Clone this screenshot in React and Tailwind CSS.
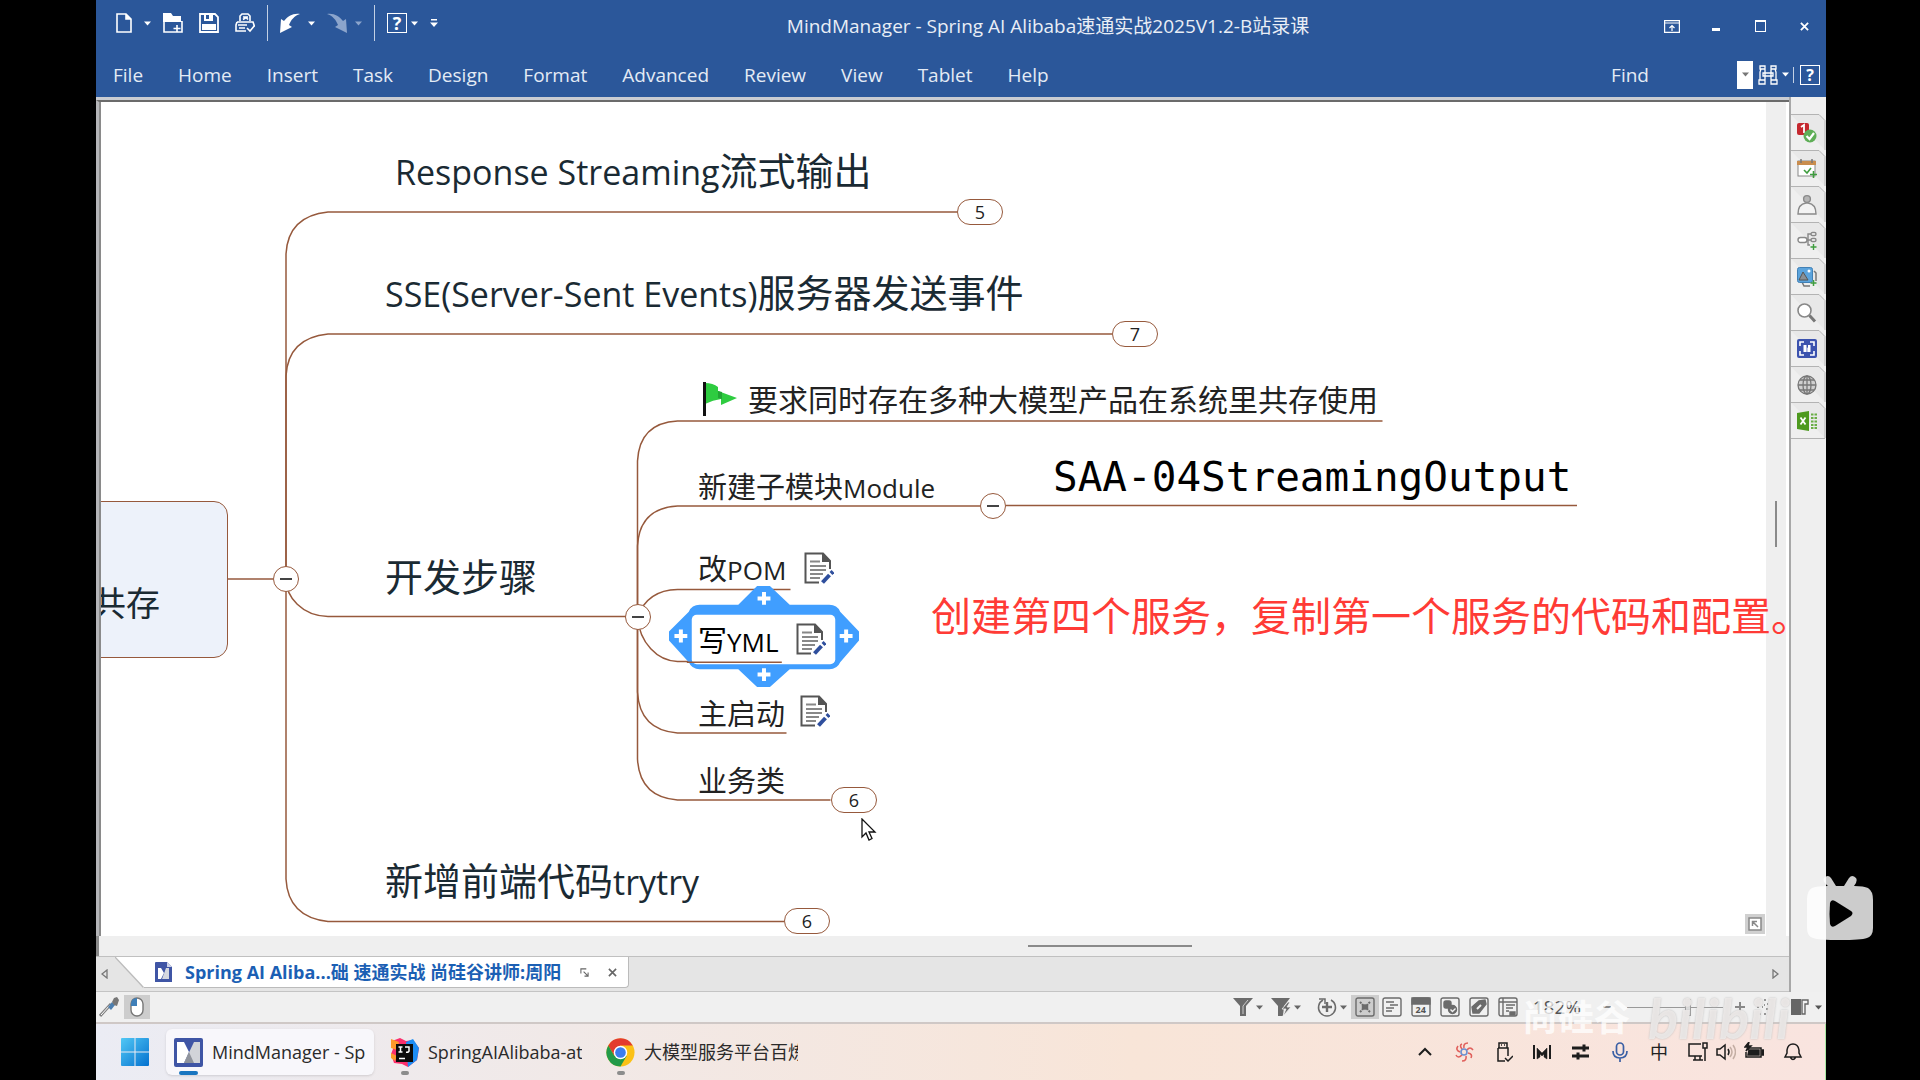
import { useState } from "react";

const MENU = ["File", "Home", "Insert", "Task", "Design", "Format", "Advanced", "Review", "View", "Tablet", "Help"];

function Caret({ className = "text-white" }) {
  return (
    <svg viewBox="0 0 7 5" className={`h-[5px] w-[7px] shrink-0 ${className}`} fill="currentColor">
      <path d="M0 .5h7L3.5 4.5z" />
    </svg>
  );
}

function IconButton({ label, className = "", children }) {
  return (
    <button type="button" aria-label={label} className={`flex shrink-0 items-center justify-center ${className}`}>
      {children}
    </button>
  );
}

/* Blue header: quick access bar, title, window buttons, ribbon tabs */
function TitleBar() {
  return (
    <div className="flex h-[52px] items-center">
      <div className="flex h-full items-center gap-3 pb-[6px] pl-5">
        <IconButton label="New">
          <svg viewBox="0 0 16 20" className="h-5 w-4" fill="none" stroke="#fff" strokeWidth="1.6">
            <path d="M1 1h9l5 5v13H1z" />
            <path d="M10 1v5h5" fill="#fff" />
          </svg>
        </IconButton>
        <Caret />
        <div className="flex items-center gap-4">
          <IconButton label="Open">
            <svg viewBox="0 0 20 20" className="h-5 w-5">
              <path d="M0 0h8l2 3h8v5h1v1H0z" fill="#fff" />
              <path d="M1 8v11h18V8" fill="none" stroke="#fff" strokeWidth="1.6" />
              <path d="M10.500 15.500h7M14 12v7" stroke="#fff" strokeWidth="1.6" />
            </svg>
          </IconButton>
          <IconButton label="Save">
            <svg viewBox="0 0 20 20" className="h-5 w-5">
              <path d="M1 1h15l3 3v15H1z" fill="none" stroke="#fff" strokeWidth="1.8" />
              <path d="M5 1h9v7H5z" fill="#fff" />
              <path d="M7 2h3v4H7z" fill="#2b579a" />
              <path d="M3 11h14v6H3z" fill="#fff" />
            </svg>
          </IconButton>
          <IconButton label="Print">
            <svg viewBox="0 0 20 20" className="h-5 w-5" fill="none" stroke="#fff" strokeWidth="1.6">
              <path d="M5 8V3l2-2h6l2 2v5M8 4h5M8 6.500l3-2 2 2M2 9h16l1 3v2M2 9l-1 3v6h10M3 12h9M4 15h6M12 15l3 3 5-6" />
            </svg>
          </IconButton>
        </div>
        <span className="h-9 w-px bg-[#c3d0e4]" />
        <div className="flex items-center gap-2">
          <IconButton label="Undo">
            <svg viewBox="0 0 20 20" className="h-5 w-5" fill="#fff">
              <path d="M0 20 1 6l3 2C8 3 13 0 20 1 14 3 11 7 9 12l3 2z" />
            </svg>
          </IconButton>
          <Caret />
        </div>
        <div className="flex items-center gap-2">
          <IconButton label="Redo">
            <svg viewBox="0 0 20 20" className="h-5 w-5" fill="#8ca5cc">
              <path d="M20 20 19 6l-3 2C12 3 7 0 0 1c6 2 9 6 11 11l-3 2z" />
            </svg>
          </IconButton>
          <Caret className="text-[#8ca5cc]" />
        </div>
        <span className="h-9 w-px bg-[#c3d0e4]" />
        <div className="flex items-center gap-1">
          <IconButton label="Help" className="h-5 w-5 border border-white text-[18px] leading-none font-bold text-white">
            ?
          </IconButton>
          <Caret />
        </div>
        <IconButton label="Customize">
          <svg viewBox="0 0 8 8" className="h-2 w-2" fill="#fff">
            <path d="M1 0h6v1.500H1zM0 3.500h8L4 8z" />
          </svg>
        </IconButton>
      </div>
      <h1 className="flex-1 truncate pl-2 text-center text-[19px] text-[#e9eef6]">
        MindManager - Spring AI Alibaba速通实战2025V1.2-B站录课
      </h1>
      <div className="flex">
        <IconButton label="Ribbon options" className="h-8 w-11">
          <svg viewBox="0 0 16 13" className="h-[13px] w-4" fill="none" stroke="#fff" strokeWidth="1.200">
            <path d="M.6.6h14.800v11.800H.6zM.6 3h14.800" />
            <path d="M8 11V6M5.500 8 8 5.500 10.500 8" />
          </svg>
        </IconButton>
        <IconButton label="Minimize" className="h-8 w-11">
          <span className="mt-[6px] h-[3px] w-2 bg-white" />
        </IconButton>
        <IconButton label="Maximize" className="h-8 w-11">
          <span className="h-3 w-[11px] border border-t-2 border-white" />
        </IconButton>
        <IconButton label="Close" className="h-8 w-11">
          <svg viewBox="0 0 10 10" className="h-[9px] w-[9px]" stroke="#fff" strokeWidth="2">
            <path d="M1 1l8 8M9 1 1 9" />
          </svg>
        </IconButton>
      </div>
    </div>
  );
}

function Ribbon() {
  return (
    <div className="flex h-[45px] items-center pr-[6px] pl-[17px]">
      <nav className="flex flex-1 items-center gap-[35px]">
        {MENU.map((item) => (
          <button key={item} type="button" className="text-[19px] leading-6 text-[#e4ebf5]">
            {item}
          </button>
        ))}
      </nav>
      <label htmlFor="find" className="text-[19px] leading-6 text-[#e4ebf5]">
        Find
      </label>
      <input id="find" type="text" className="w-[88px] bg-transparent px-2 text-white outline-none" />
      <IconButton label="Find options" className="h-7 w-4 bg-white">
        <Caret className="text-[#777]" />
      </IconButton>
      <IconButton label="Search" className="ml-[5px] gap-1">
        <svg viewBox="0 0 20 20" className="h-5 w-5" fill="none" stroke="#fff" strokeWidth="1.300">
          <path d="M2 1h5v3H2zM13 1h5v3h-5zM3 4h4v11H2V7zM17 4h-4v11h5V7zM1 15h6v4H1zM13 15h6v4h-6zM5 8h10v3H5z" />
        </svg>
        <Caret />
      </IconButton>
      <span className="mr-[6px] ml-1 h-4 w-px bg-[#c3d0e4]" />
      <IconButton label="Ribbon help" className="h-5 w-5 border border-white text-[16px] leading-none font-bold text-white">
        ?
      </IconButton>
    </div>
  );
}

/* Mind map pieces */
function Topic({ className, children }) {
  return <div className={`absolute leading-none whitespace-nowrap ${className}`}>{children}</div>;
}

function Toggle({ className }) {
  return (
    <button
      type="button"
      aria-label="Collapse branch"
      className={`absolute flex h-[26px] w-[26px] items-center justify-center rounded-full border border-[#96593c] bg-white ${className}`}
    >
      <span className="h-[2px] w-3 bg-[#444]" />
    </button>
  );
}

function Count({ className, children }) {
  return (
    <button
      type="button"
      className={`absolute flex h-[26px] w-[46px] items-center justify-center rounded-full border border-[#96593c] bg-white text-[18px] leading-none text-[#222] ${className}`}
    >
      {children}
    </button>
  );
}

function Note({ className }) {
  return (
    <svg viewBox="0 0 30 32" className={`absolute h-8 w-[30px] ${className}`}>
      <path d="M1.500 1.500h18l6 7v9L16 30.500H1.500z" fill="#fff" />
      <path d="M26 17V9l-7-7.500H1.500v29H15" fill="none" stroke="#555" strokeWidth="2" />
      <path d="M18 1v9h9z" fill="#555" />
      <path d="M6 9.500h10M6 14h16M6 18h16M6 22h13M6 26h10" stroke="#888" strokeWidth="1.800" />
      <path d="M18.500 30.500l7-7.500" stroke="#2f4f9d" strokeWidth="4" />
      <path d="M27 21.500l2-2" stroke="#2f4f9d" strokeWidth="4" />
    </svg>
  );
}

function Connectors() {
  return (
    <svg className="absolute inset-0 h-full w-full" fill="none" stroke="#96593c" strokeWidth="1.500">
      <g transform="translate(-99 -102)">
        <path d="M228 579h45" />
        <path d="M286 579V254q2-38 42-42h629" />
        <path d="M286 579V376q2-38 42-42h784" />
        <path d="M286 579c0 18 16 37 42 37.500h300" />
        <path d="M286 579v300q2 38 42 42.500h456" />
        <path d="M637.500 617V461q2-38 40-40h705" />
        <path d="M637.500 617v-71q2-38 40-40h303" />
        <path d="M1006 505.500h571" />
        <path d="M637.500 617q10-27 40-27.500h113" />
        <path d="M637.500 617c2 26 20 44 40 44.500h105" />
        <path d="M637.500 617v75q2 38 40 41h109" />
        <path d="M637.500 617v142q2 38 40 41h153" />
      </g>
    </svg>
  );
}

function Selection() {
  return (
    <svg viewBox="0 0 192 102" className="absolute top-[484px] left-[570px] h-[101px] w-[190px]">
      <path d="M89 0h13l20 19h40q8 0 11 7l19 20v9l-19 22q-3 7-11 7h-40l-20 18H89L70 84H31q-8 0-11-7L0 55v-9l20-20q3-7 11-7h39z" fill="#409eff" />
      <rect x="23" y="29" width="145" height="50" rx="5" fill="#fff" />
      <path d="M96 6v13M89.500 12.500h13M96 83v13M89.500 89.500h13M12 44v13M5.500 50.500h13M179 44v13M172.500 50.500h13" stroke="#fff" strokeWidth="4" />
      <path d="M18 77h96" stroke="#96593c" strokeWidth="1.500" />
    </svg>
  );
}

function Canvas() {
  return (
    <div className="relative min-w-0 flex-1 overflow-hidden bg-white">
      <Connectors />
      <div className="absolute top-[399px] -left-10 h-[157px] w-[169px] rounded-[14px] border border-[#96593c] bg-[#edf2fa]" />
      <Topic className="top-[484px] left-[-7px] text-[34px] text-[#1a2a33]">共存</Topic>

      <Topic className="top-[49px] left-[296px] text-[38px] text-[#1a2a33]">
        <span className="text-[34px]">Response Streaming</span>流式输出
      </Topic>
      <Topic className="top-[171px] left-[286px] text-[38px] text-[#1a2a33]">
        <span className="text-[34px]">SSE(Server-Sent Events)</span>服务器发送事件
      </Topic>
      <Topic className="top-[455px] left-[286px] text-[38px] text-[#1a2a33]">开发步骤</Topic>
      <Topic className="top-[759px] left-[286px] text-[38px] text-[#1a2a33]">
        新增前端代码<span className="text-[34px]">trytry</span>
      </Topic>

      <svg viewBox="0 0 36 36" className="absolute top-[279px] left-[603px] h-9 w-9">
        <path d="M3 2q8 0 13 4v4l19 7-16 7v-6q-8 1-16 5z" fill="#2ecc40" />
        <path d="M16 10l4 1v7l-4-1z" fill="#22a534" />
        <path d="M1 1h3v34H1z" fill="#111" />
      </svg>
      <Topic className="top-[283px] left-[649px] text-[30px] text-[#222]">
        要求同时存在多种大模型产品在系统里共存使用
      </Topic>
      <Topic className="top-[370px] left-[599px] text-[29px] text-[#222]">
        新建子模块<span className="text-[26px]">Module</span>
      </Topic>
      <Topic className="top-[355px] left-[954px] font-['DejaVu_Sans_Mono',monospace] text-[41px] text-black">
        SAA-04StreamingOutput
      </Topic>
      <Topic className="top-[452px] left-[599px] text-[29px] text-[#222]">
        改<span className="text-[26px]">POM</span>
      </Topic>
      <Note className="top-[450px] left-[705px]" />
      <Selection />
      <Topic className="top-[524px] left-[599px] text-[29px] text-black">
        写<span className="text-[26px]">YML</span>
      </Topic>
      <Note className="top-[521px] left-[697px]" />
      <Topic className="top-[597px] left-[599px] text-[29px] text-[#222]">主启动</Topic>
      <Note className="top-[593px] left-[701px]" />
      <Topic className="top-[664px] left-[599px] text-[29px] text-[#222]">业务类</Topic>

      <Toggle className="top-[464px] left-[174px]" />
      <Toggle className="top-[502px] left-[526px]" />
      <Toggle className="top-[391px] left-[881px]" />
      <Count className="top-[97px] left-[858px]">5</Count>
      <Count className="top-[219px] left-[1013px]">7</Count>
      <Count className="top-[685px] left-[732px]">6</Count>
      <Count className="top-[806px] left-[685px]">6</Count>

      <svg viewBox="0 0 16 24" className="absolute top-[716px] left-[762px] h-6 w-4">
        <path d="M1 1v18l4-4 3 7 3-1.500-3-6.500h6z" fill="#fff" stroke="#111" strokeWidth="1.300" />
      </svg>
      <button
        type="button"
        aria-label="Map overview"
        className="absolute right-px bottom-[2px] flex h-5 w-5 items-center justify-center bg-[#d0d0d0]"
      >
        <svg viewBox="0 0 14 14" className="h-[14px] w-[14px]" fill="#fff" stroke="#888" strokeWidth="1.500">
          <path d="M1 1h12v12H1zM4.500 9V4.500H9M5 5l5 5" />
        </svg>
      </button>
      <span className="absolute inset-y-0 left-0 w-[2px] bg-[#8a8a8a]" />
    </div>
  );
}

/* Task pane tabs on the right edge */
const PANES = [
  {
    name: "Task info",
    icon: (
      <>
        <rect x="0" y="0" width="12" height="12" rx="2" fill="#c5282f" />
        <path d="M4 4l3-2v8" stroke="#fff" strokeWidth="1.800" fill="none" />
        <circle cx="13" cy="13" r="6.500" fill="#5fae57" />
        <path d="M9.500 13l3 3 4.500-6" stroke="#fff" strokeWidth="2.200" fill="none" />
      </>
    ),
  },
  {
    name: "Calendar",
    icon: (
      <>
        <rect x="1" y="2" width="17" height="15" fill="#fff" stroke="#888" />
        <path d="M0 2h19v4H0z" fill="#c98d4e" />
        <path d="M4 0v4M15 0v4" stroke="#777" strokeWidth="1.500" />
        <path d="M7 11l3 3 4-5M16.500 12v7M13 15.500h7" stroke="#3f9d3f" strokeWidth="1.600" fill="none" />
      </>
    ),
  },
  {
    name: "Resources",
    icon: (
      <>
        <path d="M1 19q0-10 8-11h2q8 1 8 11z" fill="#f3f3f3" stroke="#8a8a8a" strokeWidth="1.400" />
        <circle cx="10" cy="4" r="3.400" fill="#b5b5b5" stroke="#8a8a8a" strokeWidth="1.400" />
      </>
    ),
  },
  {
    name: "Map parts",
    icon: (
      <g fill="#fff" stroke="#888" strokeWidth="1.400">
        <path d="M14 3h-3v11h2M9 9h5" fill="none" />
        <rect x="1" y="6.500" width="9" height="5" rx="2.500" />
        <rect x="14" y="1.500" width="5" height="3" rx="1.500" />
        <rect x="14" y="7.500" width="5" height="3" rx="1.500" />
        <path d="M16.500 13v6M13.500 16h6" stroke="#3f9d3f" />
      </g>
    ),
  },
  {
    name: "Library",
    icon: (
      <>
        <path d="M17 4l2 2v8M5 15l2 4h6" fill="none" stroke="#777" strokeWidth="1.500" />
        <rect x=".5" y=".5" width="15" height="15" rx="2" fill="#5ba3dc" stroke="#4180b5" />
        <path d="M2 13l4-8 5 8z" fill="#8a8f94" stroke="#555" />
        <circle cx="12" cy="4" r="1.500" fill="#fff" />
        <path d="M16.500 13v6M13.500 16h6" stroke="#3f9d3f" strokeWidth="1.500" />
      </>
    ),
  },
  {
    name: "Search",
    icon: (
      <>
        <circle cx="7.500" cy="7.500" r="6.500" fill="#fff" stroke="#888" strokeWidth="1.600" />
        <path d="M12.500 12.500l5.500 6" stroke="#777" strokeWidth="3" />
      </>
    ),
  },
  {
    name: "MindManager",
    icon: (
      <>
        <rect width="20" height="19" rx="2" fill="#3b52ae" />
        <path d="M3 7V3h4M13 3h4v4M17 12v4h-4M7 16H3v-4" fill="none" stroke="#fff" strokeWidth="1.600" />
        <path d="M6.500 6h3v7h-3zM11 6h2.500v7H11z" fill="#fff" />
        <path d="M9.500 8l1.500 1v4H9.500z" fill="#c3cbea" />
      </>
    ),
  },
  {
    name: "Browser",
    icon: (
      <g fill="none" stroke="#777" strokeWidth="1.300">
        <circle cx="10" cy="10" r="9" fill="#cfcfcf" />
        <ellipse cx="10" cy="10" rx="4" ry="9" />
        <path d="M10 1v18M1 10h18M3 5h14M3 15h14" />
      </g>
    ),
  },
  {
    name: "Excel",
    icon: (
      <>
        <path d="M0 2l12-2v20L0 18z" fill="#4e9a1f" />
        <path d="M3.500 6.500l5 7M8.500 6.500l-5 7" stroke="#fff" strokeWidth="1.800" />
        <path d="M14 3.500h6M14 7h6M14 10.500h6M14 14h6M14 17h6" stroke="#6aae45" strokeWidth="2" strokeDasharray="2.500 1" />
      </>
    ),
  },
];

function PaneTabs() {
  return (
    <aside className="flex w-[35px] shrink-0 flex-col bg-[#efefef] pt-[17px]">
      {PANES.map((pane) => (
        <button key={pane.name} type="button" aria-label={pane.name} className="h-9 w-[35px]">
          <svg viewBox="0 0 35 36" className="h-9 w-[35px]">
            <path d="M0 .5h28l6 6V36" fill="#e8e8e8" stroke="#b3b3b3" />
            <g transform="translate(6 9)">{pane.icon}</g>
          </svg>
        </button>
      ))}
      <span className="h-px w-[34px] bg-[#b3b3b3]" />
    </aside>
  );
}

function DocumentTabs() {
  return (
    <div className="flex h-[35px] border-b border-[#c4c4c4] bg-[#e5e5e5]">
      <IconButton label="Scroll tabs left" className="w-[19px] pr-[3px]">
        <svg viewBox="0 0 7 10" className="h-[10px] w-[7px]" fill="none" stroke="#777" strokeWidth="1.300">
          <path d="M6 1v8L1 5z" />
        </svg>
      </IconButton>
      <svg viewBox="0 0 29 31" className="h-[31px] w-[29px] shrink-0">
        <path d="M0 0h29v31z" fill="#fff" />
        <path d="M0 0l28.500 30.500" stroke="#bbb" strokeWidth="1.300" />
      </svg>
      <div className="flex h-[31px] w-[485px] items-center rounded-br-[4px] border-r border-b border-[#bbb] bg-white pl-[11px]">
        <svg viewBox="0 0 17 20" className="h-5 w-[17px] shrink-0">
          <path d="M0 1q0-1 1-1h11l5 5v15H0z" fill="#3f55a5" />
          <path d="M12 0v5h5z" fill="#cdd3ea" />
          <path d="M3 6h3l3 5-3 6H3z" fill="#fff" />
          <path d="M14 6h-3L7 17h7z" fill="#d5d8df" />
        </svg>
        <button type="button" className="ml-[13px] flex-1 truncate text-left text-[18px] font-bold text-[#1b5fb4]">
          Spring AI Aliba...础 速通实战 尚硅谷讲师:周阳
        </button>
        <IconButton label="Float window" className="w-6">
          <svg viewBox="0 0 10 10" className="h-[9px] w-[9px]" fill="none" stroke="#666" strokeWidth="1.200">
            <path d="M1 6V1h6M4 4l5 5M9 5v4H5" />
          </svg>
        </IconButton>
        <IconButton label="Close tab" className="w-8">
          <svg viewBox="0 0 10 10" className="h-[9px] w-[9px]" stroke="#666" strokeWidth="1.800">
            <path d="M1 1l8 8M9 1 1 9" />
          </svg>
        </IconButton>
      </div>
      <div className="flex flex-1 items-center justify-end pr-[10px]">
        <IconButton label="Scroll tabs right">
          <svg viewBox="0 0 7 10" className="h-[10px] w-[7px]" fill="none" stroke="#777" strokeWidth="1.300">
            <path d="M1 1v8l5-4z" />
          </svg>
        </IconButton>
      </div>
    </div>
  );
}

/* Framed 20x20 glyph used for the view switches in the status bar */
function ViewIcon({ children }) {
  return (
    <svg viewBox="0 0 20 20" className="h-5 w-5" fill="none" stroke="#6b6b6b" strokeWidth="1.400">
      <rect x="1" y="1" width="18" height="18" rx="2" />
      {children}
    </svg>
  );
}

function StatusBar() {
  const [zoom, setZoom] = useState(64);
  return (
    <div className="flex h-8 items-center border-b-2 border-[#cfc8c6] bg-[#f0f0f0] pr-1 pl-[3px]">
      <IconButton label="Pen">
        <svg viewBox="0 0 20 20" className="h-5 w-5">
          <path d="M1 19L12 7" stroke="#808080" strokeWidth="3" />
          <path d="M2 18L11 8" stroke="#fff" strokeWidth="1" />
          <path d="M9 10l4-5 3 3-4 5z" fill="#4d7fb0" />
          <path d="M13 5l2-4 3-1 2 3-2 6-3-1z" fill="#777" />
        </svg>
      </IconButton>
      <IconButton label="Mouse" className="ml-[5px] h-6 w-[26px] bg-[#cdcdcd]">
        <svg viewBox="0 0 14 20" className="h-5 w-[14px]">
          <rect x="1" y="1" width="12" height="18" rx="6" fill="#fff" stroke="#777" strokeWidth="1.400" />
          <path d="M7 1v8H1V7q0-6 6-6z" fill="#3f7fb8" />
        </svg>
      </IconButton>
      <div className="flex flex-1 items-center justify-end">
        <IconButton label="Filter" className="gap-[3px]">
          <svg viewBox="0 0 20 18" className="h-[18px] w-5" fill="#6b6b6b">
            <path d="M0 0h20l-7 8v10H7V8z" />
            <path d="M15 2l-5 6v8" stroke="#ccc" fill="none" />
          </svg>
          <Caret className="text-[#666]" />
        </IconButton>
        <IconButton label="Power filter" className="ml-2 gap-[3px]">
          <svg viewBox="0 0 20 18" className="h-[18px] w-5" fill="#6b6b6b">
            <path d="M0 0h19l-6 8-1 10H7V8z" />
            <path d="M17 4l-6 7h4l-3 7 8-9h-4l3-5z" stroke="#f0f0f0" strokeWidth=".8" />
          </svg>
          <Caret className="text-[#666]" />
        </IconButton>
        <IconButton label="Add view" className="ml-4 gap-[3px]">
          <svg viewBox="0 0 20 20" className="h-5 w-5" fill="none" stroke="#6b6b6b" strokeWidth="1.500">
            <path d="M6 3a8.500 8.500 0 1 0 8 0" />
            <path d="M10 5v10M5 10h10" strokeWidth="2.400" />
            <path d="M2 2h6v5" />
          </svg>
          <Caret className="text-[#666]" />
        </IconButton>
        <IconButton label="Map view" className="ml-1 h-6 w-7 bg-[#cdcdcd]">
          <ViewIcon>
            <path d="M5 5l3 3M15 5l-3 3M5 15l3-3M15 15l-3-3" strokeWidth="2" strokeDasharray="2 1" />
            <rect x="7.500" y="8" width="5" height="4" fill="#6b6b6b" />
          </ViewIcon>
        </IconButton>
        <div className="ml-[3px] flex gap-[9px]">
          <IconButton label="Outline view">
            <ViewIcon>
              <path d="M4 5h8M8 8h8M4 11h8M4 14h6" />
            </ViewIcon>
          </IconButton>
          <IconButton label="Schedule view" className="relative">
            <ViewIcon>
              <path d="M1 1h18v6H1z" fill="#6b6b6b" />
            </ViewIcon>
            <span className="absolute bottom-[2px] text-[9px] leading-[10px] font-bold text-[#555]">24</span>
          </IconButton>
          <IconButton label="Icon view">
            <ViewIcon>
              <rect x="4" y="4" width="7" height="7" rx="2" fill="#6b6b6b" />
              <circle cx="12.500" cy="12.500" r="4" fill="#6b6b6b" />
              <path d="M10.500 12.500l2 2 3-3" stroke="#f0f0f0" />
            </ViewIcon>
          </IconButton>
          <IconButton label="Tag view">
            <ViewIcon>
              <path d="M4 16l-1-6 7-6 6-1 1 4-7 9z" fill="#6b6b6b" />
              <path d="M8 12l4-4" stroke="#f0f0f0" strokeWidth="2" />
            </ViewIcon>
          </IconButton>
          <IconButton label="Gantt view">
            <ViewIcon>
              <path d="M1 5h18M5 1v18M8 8h9M8 11h7M8 14h3" />
              <path d="M12 18v-3h5v3z" fill="#6b6b6b" />
            </ViewIcon>
          </IconButton>
        </div>
        <span className="ml-[15px] text-[19px] text-[#555]">182%</span>
        <IconButton label="Zoom out" className="ml-[22px]">
          <span className="h-[2px] w-2 bg-[#888]" />
        </IconButton>
        <input
          type="range"
          aria-label="Zoom"
          min="0"
          max="100"
          value={zoom}
          onChange={(e) => setZoom(e.target.value)}
          className="mr-3 ml-4 h-[18px] w-24 appearance-none bg-transparent [&::-webkit-slider-runnable-track]:h-px [&::-webkit-slider-runnable-track]:bg-[#999] [&::-webkit-slider-thumb]:-mt-2 [&::-webkit-slider-thumb]:h-[17px] [&::-webkit-slider-thumb]:w-[6px] [&::-webkit-slider-thumb]:appearance-none [&::-webkit-slider-thumb]:border [&::-webkit-slider-thumb]:border-[#999] [&::-webkit-slider-thumb]:bg-[#ddd]"
        />
        <IconButton label="Zoom in">
          <svg viewBox="0 0 10 10" className="h-[10px] w-[10px]" stroke="#888" strokeWidth="2">
            <path d="M5 0v10M0 5h10" />
          </svg>
        </IconButton>
        <IconButton label="Fit map" className="ml-3">
          <svg viewBox="0 0 16 16" className="h-4 w-4" fill="none" stroke="#777" strokeWidth="1.600">
            <path d="M1 4V1h3M7 1h2M12 1h3v3M15 7v2M15 12v3h-3M9 15H7M4 15H1v-3M1 9V7M5 8h1M10 5h1M9 10h3M7 6h1" />
          </svg>
        </IconButton>
        <IconButton label="Panels" className="ml-[18px] gap-[6px]">
          <svg viewBox="0 0 18 16" className="h-4 w-[18px]">
            <path d="M0 0h10v16H0z" fill="#666" />
            <path d="M11 1h6v4h-3v10h-3z" fill="none" stroke="#666" strokeWidth="1.400" />
          </svg>
          <Caret className="text-[#555]" />
        </IconButton>
      </div>
    </div>
  );
}

/* Windows taskbar */
function TaskItem({ icon, label, active }) {
  return (
    <button
      type="button"
      className={`relative flex h-[46px] w-[208px] shrink-0 items-center gap-[9px] rounded-md pl-2 ${active ? "bg-[#f8f7fb] shadow-sm" : ""}`}
    >
      {icon}
      <span className="w-[154px] overflow-hidden text-left text-[18px] whitespace-nowrap text-[#2a2a2a]">{label}</span>
      <span
        className={`absolute bottom-0 rounded-full ${active ? "left-[13px] h-1 w-[19px] bg-[#1975c0]" : "left-[19px] h-1 w-2 bg-[#8c8c8c]"}`}
      />
    </button>
  );
}

function TrayIcon({ label, children }) {
  return (
    <IconButton label={label}>
      <svg viewBox="0 0 20 20" className="h-5 w-5" fill="none" stroke="#1d1d1d" strokeWidth="1.500">
        {children}
      </svg>
    </IconButton>
  );
}

const mindIcon = (
  <svg viewBox="0 0 29 29" className="h-[29px] w-[29px] shrink-0">
    <rect width="29" height="29" rx="2" fill="#3f55a5" />
    <path d="M3 4h7l5 10-5 11H3z" fill="#fff" />
    <path d="M26 4h-6L10 25h16z" fill="#d2d4d9" />
    <path d="M15 14l5 11H10z" fill="#8f939c" />
  </svg>
);

const ideaIcon = (
  <svg viewBox="0 0 29 29" className="h-[29px] w-[29px] shrink-0">
    <path d="M2 3l8-3 6 3 7-1 6 8-2 12-9 7-6-3-8-1-3-9 2-5z" fill="#fb2f6c" />
    <path d="M16 4l7-3 6 9-2 12-9 7z" fill="#1c8df5" />
    <path d="M1 1l8 3-2 8-6-2zM1 15l6 3-2 5-4-3z" fill="#fd9a2b" />
    <rect x="6" y="6" width="17" height="18" fill="#0b0b0b" />
    <path d="M8.500 9h4M10.500 9v5M8.500 14h4M15 9h4v4q0 1.500-3 1.200M9 20.500h6" stroke="#fff" strokeWidth="1.500" fill="none" />
  </svg>
);

const chromeIcon = (
  <svg viewBox="0 0 30 30" className="h-[29px] w-[29px] shrink-0">
    <circle cx="15" cy="15" r="14.500" fill="#fbc116" />
    <path d="M2.400 7.700A14.500 14.500 0 0 1 27.600 7.700H15l-6.300 10.900z" fill="#e33b2e" />
    <path d="M2.400 7.700A14.500 14.500 0 0 0 15 29.500l6.300-10.900H8.700z" fill="#229a48" />
    <circle cx="15" cy="15" r="7" fill="#fff" />
    <circle cx="15" cy="15" r="5.500" fill="#3b7ded" />
  </svg>
);

function Taskbar() {
  return (
    <div className="flex h-14 items-center border-r border-[#a9e8a4] bg-linear-to-r from-[#ebecf4] via-[#f8e5d8] via-60% to-[#f9e4df] pr-[22px] pl-[25px]">
      <IconButton label="Start" className="mr-[17px]">
        <svg viewBox="0 0 28 28" className="h-7 w-7">
          <defs>
            <linearGradient id="win" x2="1" y2="1">
              <stop stopColor="#52c8f5" />
              <stop offset="1" stopColor="#0471cf" />
            </linearGradient>
          </defs>
          <path d="M0 1q0-1 1-1h12.500v13.500H0zM14.500 0H27q1 0 1 1v12.500H14.500zM0 14.500h13.500V28H1q-1 0-1-1zM14.500 14.500H28V27q0 1-1 1H14.500z" fill="url(#win)" />
        </svg>
      </IconButton>
      <div className="flex gap-2">
        <TaskItem active icon={mindIcon} label="MindManager - Spring AI" />
        <TaskItem icon={ideaIcon} label="SpringAIAlibaba-atguigu" />
        <TaskItem icon={chromeIcon} label="大模型服务平台百炼控制台" />
      </div>
      <div className="flex flex-1 items-center justify-end gap-[19px]">
        <TrayIcon label="Hidden icons">
          <path d="M4 13l6-6 6 6" strokeWidth="2" />
        </TrayIcon>
        <TrayIcon label="Assistant">
          <g stroke="#e0605c" strokeWidth="1.600">
            <path d="M10 6q-1-5 4-5M13 8q3-4 6 0M14 11q5 1 3 5M12 14q1 5-4 5M8 13q-4 4-6 0M6 10Q1 8 4 4M8 7Q5 3 8 2" />
          </g>
          <circle cx="10" cy="10" r="3" stroke="#6b8fd0" strokeWidth="1.600" />
        </TrayIcon>
        <TrayIcon label="USB">
          <path d="M6 6V1h8v5M8 3h1M11 3h1M5 6h10v8M5 6v13h7M12 16l3 3 5-5" />
        </TrayIcon>
        <TrayIcon label="Mind">
          <path d="M2 3v14M18 3v14" strokeWidth="2" />
          <path d="M5 17V6l5 5 5-5v11l-3-2v-3l-2 2-2-2v3z" fill="#1d1d1d" strokeWidth=".5" />
        </TrayIcon>
        <TrayIcon label="Settings">
          <path d="M1 6h17M1 14h17M13 2.500v7M7 10.500v7" strokeWidth="3" />
        </TrayIcon>
        <TrayIcon label="Microphone">
          <g stroke="#3a5fa5" strokeWidth="1.700">
            <rect x="6.500" y="1" width="7" height="12" rx="3.500" />
            <path d="M3 9q0 7 7 7t7-7M10 16v4" />
          </g>
        </TrayIcon>
        <button type="button" className="w-5 text-center text-[18px] leading-none text-[#222]">
          中
        </button>
        <div className="flex gap-2">
          <TrayIcon label="Network">
            <path d="M13 2H1v12h13M5 18h10M7 14v4M12 14v4M15 1h4v5h-4zM17 6v13" />
          </TrayIcon>
          <TrayIcon label="Volume">
            <path d="M1 7v6h3l5 4V3L4 7z" />
            <path d="M12 7q2 3 0 6" />
            <path d="M14 5q4 5 0 10M17 3q5 7 0 14" stroke="#c4aea4" />
          </TrayIcon>
          <TrayIcon label="Battery">
            <path d="M3 6h14v9H2v-5" />
            <path d="M5 8h10v5H4zM18 8h2v5h-2zM5 0L1 5h3L2 9l5-5H4z" fill="#1d1d1d" />
          </TrayIcon>
        </div>
        <TrayIcon label="Notifications">
          <path d="M2 15h16l-2-4V8q-1-6-6-6T4 8v3zM7.500 15.500q2.500 4 5 0" />
        </TrayIcon>
      </div>
    </div>
  );
}

/* Video player marks drawn over the recording */
function Watermark() {
  return (
    <>
      <svg viewBox="0 0 68 66" className="absolute right-[46px] bottom-[139px] h-[66px] w-[68px]">
        <path
          d="M18 3q4-4 7 0l5 8h8l5-8q3-4 7 0 2 3-2 8 10 0 14 2 5 3 5 12v28q0 8-6 10-6 2-27 2T7 63q-6-2-6-10V24q0-8 5-11 4-2 16-2-6-5-4-8z"
          fill="#fff"
          fillOpacity=".8"
        />
        <path d="M24 28q1-4 5-2l16 10q3 2 0 5L29 51q-4 2-5-2-1-10 0-21z" fill="#000" />
      </svg>
      <div className="pointer-events-none absolute right-[130px] bottom-[30px] flex items-center gap-[18px] text-white/75">
        <span className="text-[36px] leading-none font-bold">尚硅谷</span>
        <span className="font-['Lato',sans-serif] text-[56px] leading-[64px] font-bold text-[#f2efed]/80 italic [text-shadow:0_0_2px_#bbb]">
          bilibili
        </span>
      </div>
    </>
  );
}

export default function App() {
  return (
    <div className="relative min-h-screen overflow-hidden bg-black pr-[94px] pl-24 font-['Open_Sans','Noto_Sans_CJK_SC',sans-serif]">
      <main className="flex h-screen flex-col bg-[#efefef]">
        <header className="bg-[#2b579a]">
          <TitleBar />
          <Ribbon />
        </header>
        <div className="flex min-h-0 flex-1">
          <div className="relative flex min-w-0 flex-1 flex-col border-r-2 border-[#a8a8a8]">
            <div className="flex min-h-0 flex-1 flex-col border-t-[3px] border-b border-t-[#c9ccd2] border-b-[#c0c0c0]">
              <div className="flex min-h-0 flex-1 border-t-2 border-l-[3px] border-t-[#6b6b6b] border-l-[#b4b5b8]">
                <Canvas />
                <div className="flex w-5 justify-center pt-[399px]">
                  <span className="h-[46px] w-[2px] bg-[#8a8a8a]" />
                </div>
                <span className="w-[3px] bg-white" />
              </div>
              <div className="flex h-5 items-center justify-center border-l-[3px] border-l-[#8a8a8a] pl-[332px]">
                <span className="h-[2px] w-[164px] bg-[#8a8a8a]" />
              </div>
            </div>
            <DocumentTabs />
            <p className="absolute top-[499px] left-[835px] text-[40px] leading-none whitespace-nowrap text-[#ff3b36]">
              创建第四个服务，复制第一个服务的代码和配置。
            </p>
          </div>
          <PaneTabs />
        </div>
        <StatusBar />
        <Taskbar />
      </main>
      <Watermark />
    </div>
  );
}
